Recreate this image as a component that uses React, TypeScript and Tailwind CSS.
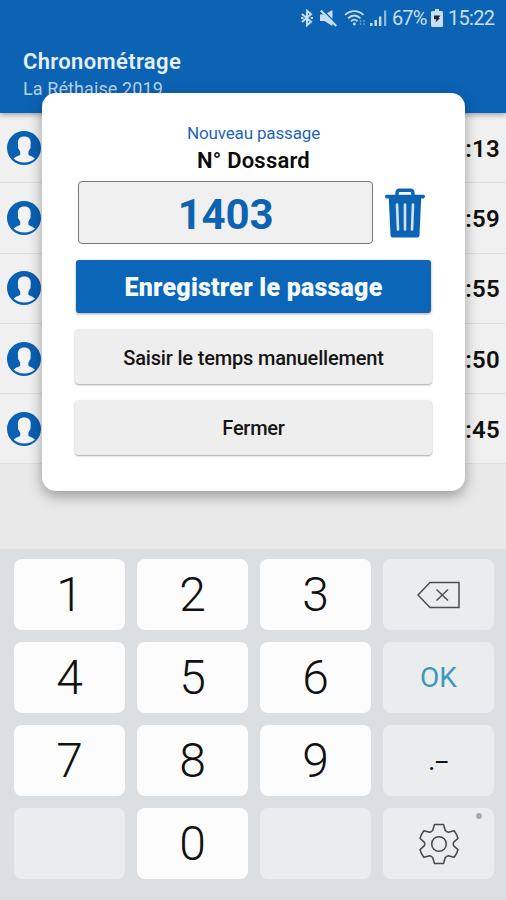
import clsx from "clsx";

interface IPassage {
  bib: string;
  time: string;
}

interface IKey {
  id: string;
  label?: string;
}

const passages: IPassage[] = [
  { bib: "1", time: ":13" },
  { bib: "2", time: ":59" },
  { bib: "3", time: ":55" },
  { bib: "4", time: ":50" },
  { bib: "5", time: ":45" },
];

const keys: IKey[] = [
  { id: "1", label: "1" },
  { id: "2", label: "2" },
  { id: "3", label: "3" },
  { id: "delete" },
  { id: "4", label: "4" },
  { id: "5", label: "5" },
  { id: "6", label: "6" },
  { id: "ok" },
  { id: "7", label: "7" },
  { id: "8", label: "8" },
  { id: "9", label: "9" },
  { id: "symbols" },
  { id: "empty-left" },
  { id: "0", label: "0" },
  { id: "empty-right" },
  { id: "settings" },
];

const BluetoothIcon = () => (
  <svg width="12" height="18" viewBox="0 0 12 18" fill="none" stroke="currentColor" strokeWidth="2">
    <path d="M1 5 L10 12.8 L6 16.2 V1.8 L10 5.2 L1 13" />
    <path d="M0 9h2.500M9.800 9H12" />
  </svg>
);

const MuteIcon = () => (
  <svg width="17" height="18" viewBox="0 0 17 18">
    <path d="M0 5.500h4.500l8-4.500v16l-8-5H0z" fill="currentColor" />
    <path d="M2.500 .8l15 15" stroke="#0c63b4" strokeWidth="1.500" />
    <path d="M.8 1.500l15.500 15.500" stroke="currentColor" strokeWidth="2" />
  </svg>
);

const WifiIcon = () => (
  <svg width="22" height="18" viewBox="0 0 22 18" fill="none" stroke="currentColor" strokeWidth="1.700">
    <path d="M1 6c5.500-5.300 13-5.300 18.500 0M4 9.300c4-3.600 8.500-3.600 12.500 0M7 12.300c2-2 4.500-2 6.500 0" />
    <circle cx="10.300" cy="15" r="1.400" fill="currentColor" stroke="none" />
    <path d="M16.500 11v5M20 11v5" strokeWidth="1.500" strokeDasharray="2 1" opacity=".45" />
  </svg>
);

const SignalIcon = () => (
  <svg width="18" height="18" viewBox="0 0 18 18" fill="currentColor">
    <path d="M0 14h2.500v3H0zM4.500 11h2.400v6H4.500zM9 7.500h2.300V17H9z" />
    <path d="M14 1.500h2.300V17H14z" opacity=".65" />
  </svg>
);

const BatteryIcon = () => (
  <svg width="12" height="18" viewBox="0 0 12 18">
    <path d="M4 0h4v2h2.500Q12 2 12 3.500v13Q12 18 10.500 18h-9Q0 18 0 16.500v-13Q0 2 1.500 2H4z" fill="currentColor" />
    <path d="M3 6.500h6.500L7.500 9H9l-4.500 4.500.8-3.300H3z" fill="#17273b" />
  </svg>
);

const AvatarIcon = () => (
  <svg width="34" height="34" viewBox="0 0 34 34">
    <circle cx="17" cy="17" r="17" fill="#0a60b2" />
    <path
      d="M17.300 5.500c-4.300 0-6.600 2.500-6.400 6.500 0 1 .1 2 .2 3-.4 1.600.1 2.800.9 3.300.3 1 .7 1.800 1.200 2.500v3c-.8 1-4.200 1.400-6.500 3.900C9.500 30 13 31.500 17.300 31.500s7.800-1.500 10.600-3.800c-2.300-2.500-5.700-2.900-6.500-3.900v-3c.5-.7.900-1.500 1.200-2.500.8-.5 1.300-1.700.9-3.300.1-1 .2-2 .2-3 .2-4-2.100-6.500-6.400-6.500z"
      fill="#f3f3f3"
    />
  </svg>
);

const TrashIcon = () => (
  <svg width="40" height="50" viewBox="0 0 40 50">
    <path d="M12 7.500V5.500Q12 2.300 14.500 2.300h11Q28 2.300 28 5.500V7.500" fill="none" stroke="#0c63b4" strokeWidth="3.400" />
    <path d="M1.500 6.800h37q1.500 0 1.500 1.800t-1.500 1.800h-2.300L34.500 47.500q-.2 2-2 2h-25q-1.800 0-2-2L3.800 10.400H1.500Q0 10.400 0 8.600T1.500 6.800z" fill="#0c63b4" />
    <path d="M12 16.500l1 25M20 16.500v25M28 16.500l-1 25" fill="none" stroke="#d3e3f3" strokeWidth="2.600" strokeLinecap="round" />
  </svg>
);

const DeleteIcon = () => (
  <svg width="44" height="28" viewBox="0 0 44 28" fill="none" stroke="#4c4e50" strokeWidth="1.500">
    <path d="M1 14 13 1.500H42V26.500H13z" />
    <path d="M19.500 8.500l11.500 11M31 8.500l-11.500 11" />
  </svg>
);

const GearIcon = () => (
  <svg width="40" height="42" viewBox="-20 -21 40 42" fill="none" stroke="#45474a" strokeWidth="1.500" strokeLinejoin="round">
    <path d="M-4.500-19.500H4.500L6.300-13.500Q7.600-12 9.300-11.700L15.200-13.300Q18-9.500 19-5.800L14.600-1.600Q13.800 0 14.600 1.600L19 5.800Q18 9.500 15.200 13.300L9.300 11.700Q7.600 12 6.300 13.500L4.500 19.500H-4.500L-6.300 13.500Q-7.600 12-9.300 11.700L-15.200 13.300Q-18 9.500-19 5.800L-14.600 1.600Q-13.800 0-14.600-1.600L-19-5.800Q-18-9.500-15.200-13.300L-9.300-11.700Q-7.600-12-6.300-13.500z" />
    <circle r="7.300" />
  </svg>
);

const StatusBar = () => {
  return (
    <div className="flex h-9 items-center justify-end pr-3 text-[#c9dff3]">
      <BluetoothIcon />
      <div className="ml-[7px] flex">
        <MuteIcon />
      </div>
      <div className="ml-[7px] flex">
        <WifiIcon />
      </div>
      <div className="ml-1 flex">
        <SignalIcon />
      </div>
      <span className="ml-1 w-[34px] text-[20px] tracking-[-0.9px] whitespace-nowrap">67%</span>
      <div className="ml-[5px] flex">
        <BatteryIcon />
      </div>
      <span className="ml-[5px] w-[46px] text-[20px] tracking-[-0.7px] whitespace-nowrap">15:22</span>
    </div>
  );
};

const Header = () => {
  return (
    <header className="relative h-[113px] bg-[#0c63b4] shadow-[0_2px_5px_rgba(0,0,0,0.3)]">
      <StatusBar />
      <div className="pt-[13px] pl-[23px]">
        <h1 className="text-[22px] leading-[26px] font-semibold tracking-[0.35px] text-[#e5effa]">Chronométrage</h1>
        <p className="mt-[3px] text-[18px] leading-[22px] tracking-[0.1px] text-[#b9d2ec]">La Réthaise 2019</p>
      </div>
    </header>
  );
};

const PassageRow = ({ time }: IPassage) => {
  return (
    <li className="flex h-[70.3px] items-center justify-between border-b border-[#dedede] bg-[#f0f0f0] pr-[6px] pl-[7px]">
      <AvatarIcon />
      <span className="pt-[2px] text-[24px] font-semibold tracking-[0.3px] text-[#111]">{time}</span>
    </li>
  );
};

const PassageDialog = () => {
  return (
    <section className="absolute top-[93px] left-[42px] flex h-[398px] w-[423px] flex-col rounded-[14px] bg-white px-[33px] pt-[29px] shadow-[0_5px_14px_rgba(0,0,0,0.35)]">
      <p className="text-center text-[17px] leading-[22px] tracking-[-0.15px] text-[#1e66b8]">Nouveau passage</p>
      <h2 className="mt-1 text-center text-[22px] leading-[26px] font-semibold tracking-[0.2px] text-[#0a0a0a]">N° Dossard</h2>
      <div className="mt-[7px] flex items-center pl-[3px]">
        <div className="flex h-[63px] w-[295px] items-center justify-center rounded border border-[#777] bg-[#f0f0f0] pt-[3px] text-[42px] font-bold tracking-[-0.2px] text-[#0c63b4]">
          1403
        </div>
        <button className="ml-3">
          <TrashIcon />
        </button>
      </div>
      <button className="mx-px mt-4 h-[53px] rounded-[3px] bg-[#0c66b8] pt-[3px] text-[25px] font-black tracking-[0.22px] text-[#f4f9ff] shadow-[0_1px_3px_rgba(0,0,0,0.35)]">
        Enregistrer le passage
      </button>
      <button className="mt-4 h-[55px] rounded bg-[#eee] pt-[2px] text-[20px] font-medium tracking-[-0.18px] text-[#151515] shadow-[0_1px_2px_rgba(0,0,0,0.35)]">
        Saisir le temps manuellement
      </button>
      <button className="mt-4 h-[55px] rounded bg-[#eee] pt-px text-[20px] font-medium tracking-[-0.25px] text-[#151515] shadow-[0_1px_2px_rgba(0,0,0,0.35)]">
        Fermer
      </button>
    </section>
  );
};

const KeypadKey = ({ id, label }: IKey) => {
  return (
    <button
      className={clsx(
        "relative flex items-center justify-center rounded-lg",
        label ? "bg-[#fcfcfc]" : "bg-[#eaecee]",
      )}
    >
      {label && <span className="text-[48px] leading-none font-light text-[#111]">{label}</span>}
      {id === "delete" && <DeleteIcon />}
      {id === "ok" && <span className="text-[28px] text-[#3b9abb]">OK</span>}
      {id === "symbols" && (
        <span className="flex pr-[6px] text-[28px] text-[#111]">
          .<span className="origin-left scale-x-175">-</span>
        </span>
      )}
      {id === "settings" && (
        <>
          <GearIcon />
          <span className="absolute top-[5px] right-[12px] size-[6px] rounded-full bg-[#a9abad]" />
        </>
      )}
    </button>
  );
};

const Keypad = () => {
  return (
    <div className="grid h-[351px] grid-cols-4 grid-rows-4 gap-3 bg-[#dcdfe2] pt-[10px] pr-3 pb-[21px] pl-[14px]">
      {keys.map((key) => (
        <KeypadKey key={key.id} {...key} />
      ))}
    </div>
  );
};

export default function App() {
  return (
    <div className="relative flex h-[900px] w-[506px] flex-col overflow-hidden bg-[#e9e9e9] font-[Roboto,sans-serif]">
      <Header />
      <ul className="flex-1">
        {passages.map((passage) => (
          <PassageRow key={passage.bib} {...passage} />
        ))}
      </ul>
      <Keypad />
      <PassageDialog />
    </div>
  );
}
